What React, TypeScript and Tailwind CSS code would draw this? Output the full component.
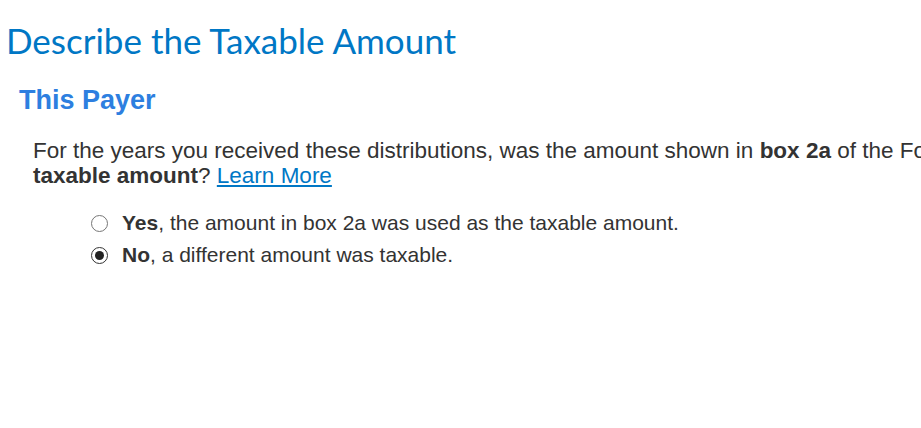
const App = (): JSX.Element => {
  return (
    <div className="w-[921px] h-[428px] overflow-hidden bg-white">
      <div className="w-[1100px] pl-[6px] pt-[20px]">
        <h1 className="text-[35px] leading-[40px] text-[#0077c5] font-['Lato',sans-serif] font-normal">
          Describe the Taxable Amount
        </h1>
        <h2 className="mt-[25px] ml-[13px] text-[27px] leading-[30px] font-bold text-[#2d7fe0] font-['Liberation_Sans',Arial,sans-serif]">
          This Payer
        </h2>
        <p className="mt-[23px] ml-[27px] text-[22.5px] leading-[25px] text-[#333] font-['Liberation_Sans',Arial,sans-serif]">
          For the years you received these distributions, was the amount shown in <b>box 2a</b> of the Form 1099-R the
          <br />
          <b>taxable amount</b>?{' '}
          <a href="#" className="text-[#0077c5] underline">
            Learn More
          </a>
        </p>
        <div className="mt-[24px] ml-[85px] flex flex-col gap-[10px] text-[21px] leading-[22px] text-[#333] font-['Liberation_Sans',Arial,sans-serif]">
          <label className="flex items-center gap-[14px]">
            <span className="w-[17px] h-[17px] rounded-full border border-[#767676] bg-white" />
            <span>
              <b>Yes</b>, the amount in box 2a was used as the taxable amount.
            </span>
          </label>
          <label className="flex items-center gap-[14px]">
            <span className="w-[17px] h-[17px] rounded-full border border-[#333] bg-white flex items-center justify-center">
              <span className="w-[9px] h-[9px] rounded-full bg-[#222]" />
            </span>
            <span>
              <b>No</b>, a different amount was taxable.
            </span>
          </label>
        </div>
      </div>
    </div>
  );
};

export default App;
